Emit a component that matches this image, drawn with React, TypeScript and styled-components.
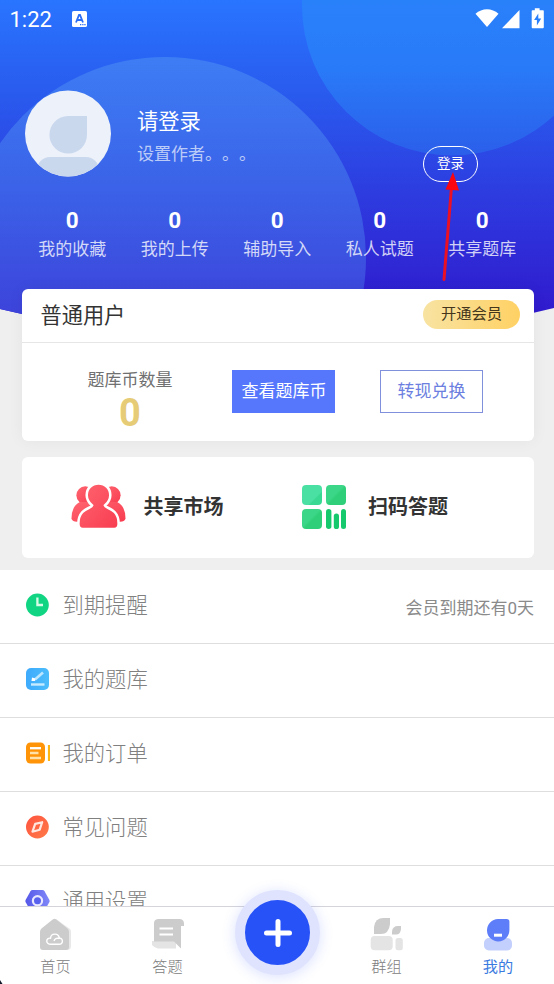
import React from "react";
import styled, { createGlobalStyle } from "styled-components";

const Global = createGlobalStyle`
  * { box-sizing: border-box; }
  body {
    margin: 0;
    background: #efefef;
    font-family: Roboto, "Noto Sans CJK SC", sans-serif;
    font-weight: 400;
    text-spacing-trim: space-all;
  }
  svg { display: block; flex: none; }
`;

const Screen = styled.div`
  position: relative;
  width: 554px;
  height: 984px;
  overflow: hidden;
  display: flex;
  flex-direction: column;
  background: #efefef;
`;

const Backdrop = styled.svg`
  position: absolute;
  left: 0;
  top: 0;
`;

const Arrow = styled.svg`
  position: absolute;
  left: 436px;
  top: 170px;
`;

const Corner = styled.svg`
  position: absolute;
  left: 0;
  bottom: 0;
`;

const Hero = styled.header`
  position: relative;
  height: 289px;
  flex: none;
  color: #fff;
`;

const StatusBar = styled.div`
  height: 38px;
  display: flex;
  align-items: center;
  padding: 0 8px 0 9.5px;
`;

const Clock = styled.span`
  font-size: 22px;
  line-height: 24px;
  width: 62.5px;
  padding-top: 1px;
`;

const StatusIcons = styled.div`
  margin-left: auto;
  display: flex;
`;

const Profile = styled.div`
  display: flex;
  height: 87px;
  margin-top: 52px;
  padding: 0 76px 0 25px;
`;

const Names = styled.div`
  margin-left: 26px;
  padding-top: 17px;
`;

const UserName = styled.div`
  font-size: 21.3px;
  line-height: 30px;
`;

const UserNote = styled.div`
  font-size: 17px;
  line-height: 24px;
  margin-top: 5px;
  color: rgba(255, 255, 255, 0.68);
  white-space: nowrap;
`;

const LoginButton = styled.button`
  width: 55px;
  height: 36px;
  margin: 56px 0 0 auto;
  padding: 0 0 2px;
  border: 1px solid #fff;
  border-radius: 18px;
  background: transparent;
  color: #fff;
  font-family: inherit;
  font-size: 13.6px;
  line-height: 20px;
`;

const Stats = styled.div`
  display: grid;
  grid-template-columns: repeat(5, 1fr);
  padding: 0 20.5px 0 21px;
  margin-top: 29px;
  text-align: center;
`;

const StatValue = styled.div`
  font-size: 22.5px;
  line-height: 28px;
  font-weight: 700;
`;

const StatLabel = styled.div`
  font-size: 17px;
  line-height: 24px;
  margin-top: 3px;
  color: rgba(255, 255, 255, 0.78);
`;

const Card = styled.section<{ $height: number; $top?: number; $shadow?: boolean }>`
  position: relative;
  flex: none;
  height: ${(p) => p.$height}px;
  margin: ${(p) => p.$top ?? 0}px 20px 0 21.5px;
  border-radius: 6px;
  background: #fff;
  box-shadow: ${(p) => (p.$shadow ? "0 0 16px rgba(0, 0, 0, 0.05)" : "none")};
`;

const CardHead = styled.div`
  height: 54px;
  display: flex;
  align-items: center;
  justify-content: space-between;
  padding: 0 14px 3px 19px;
  border-bottom: 1px solid #e6e6e6;
`;

const Tier = styled.span`
  padding-top: 3px;
  font-size: 21.2px;
  line-height: 30px;
  color: #333;
`;

const Upgrade = styled.button`
  width: 97px;
  height: 29px;
  border: 0;
  padding: 0;
  border-radius: 15px;
  background: linear-gradient(90deg, #f8e3a2, #ffd164);
  color: #44361c;
  font-family: inherit;
  font-size: 15.3px;
  line-height: 22px;
`;

const CoinRow = styled.div`
  display: flex;
  padding: 27px 0 0 50px;
`;

const CoinInfo = styled.div`
  width: 117px;
  margin-top: -1px;
  text-align: center;
`;

const CoinLabel = styled.div`
  font-size: 17px;
  line-height: 22px;
  color: #707070;
`;

const CoinValue = styled.div`
  font-size: 38px;
  line-height: 44px;
  font-weight: 700;
  color: #e6cc76;
`;

const CoinButton = styled.button<{ $filled?: boolean }>`
  width: 103px;
  height: 43px;
  margin-left: 44.5px;
  padding: 0 0 2px 1px;
  border: 1px solid ${(p) => (p.$filled ? "#5677fc" : "#8090dc")};
  background: ${(p) => (p.$filled ? "#5677fc" : "#fff")};
  color: ${(p) => (p.$filled ? "#fff" : "#6c7fe0")};
  font-family: inherit;
  font-size: 17px;
  line-height: 24px;
  white-space: nowrap;

  &:first-of-type { margin-left: 43.5px; }
`;

const Shortcuts = styled.div`
  display: flex;
  align-items: center;
  height: 100%;
  padding: 0 0 1px 48px;
`;

const Shortcut = styled.div<{ $width: number; $gap: number }>`
  display: flex;
  align-items: center;
  gap: ${(p) => p.$gap}px;
  width: ${(p) => p.$width}px;
  font-size: 20px;
  line-height: 28px;
  font-weight: 700;
  color: #333;
`;

const Menu = styled.main`
  flex: 1;
  min-height: 0;
  overflow: hidden;
  margin-top: 12px;
  background: #fff;
`;

const MenuRow = styled.div`
  height: 74px;
  display: flex;
  align-items: center;
  padding: 0 20px 4px 25px;
  border-bottom: 1px solid #dedede;
`;

const MenuLabel = styled.span`
  margin-left: 12.5px;
  padding-top: 3px;
  font-size: 21.3px;
  line-height: 30px;
  font-weight: 300;
  color: #808080;
`;

const MenuNote = styled.span`
  margin-left: auto;
  padding-top: 6px;
  font-size: 17px;
  line-height: 24px;
  font-weight: 400;
  color: #8a8a8a;
`;

const NavBar = styled.nav`
  position: relative;
  flex: none;
  height: 78px;
  display: grid;
  grid-template-columns: 111px 113px 107px 111px 112px;
  background: #fff;
  border-top: 1px solid #d4d4da;
`;

const NavItem = styled.div<{ $active?: boolean }>`
  display: flex;
  flex-direction: column;
  align-items: center;
  padding-top: 9px;
  gap: 5px;
  font-size: 15.2px;
  line-height: 20px;
  font-weight: ${(p) => (p.$active ? 400 : 300)};
  color: ${(p) => (p.$active ? "#397be0" : "#808080")};
`;

const AddButton = styled.button`
  position: absolute;
  left: 235px;
  top: -17px;
  width: 85px;
  height: 85px;
  display: grid;
  place-items: center;
  padding: 0;
  border: 10.5px solid #dfe3fd;
  border-radius: 50%;
  background: #2752f8;
  box-shadow: 0 2px 14px rgba(70, 100, 255, 0.2);
`;

function HeroBackdrop() {
  return (
    <Backdrop width="554" height="345" viewBox="0 0 554 345">
      <defs>
        <linearGradient id="sky" x1="0" y1="0" x2="0" y2="1">
          <stop offset="0" stopColor="#2975ff" />
          <stop offset="0.28" stopColor="#295aee" />
          <stop offset="0.55" stopColor="#2d3de0" />
          <stop offset="0.9" stopColor="#301bce" />
          <stop offset="1" stopColor="#3018ca" />
        </linearGradient>
        <linearGradient id="discRight" gradientUnits="userSpaceOnUse" x1="0" y1="0" x2="0" y2="156">
          <stop offset="0" stopColor="#2981fa" />
          <stop offset="0.45" stopColor="#297af8" />
          <stop offset="1" stopColor="#2b5eea" />
        </linearGradient>
        <linearGradient id="discLeft" gradientUnits="userSpaceOnUse" x1="0" y1="57" x2="0" y2="320">
          <stop offset="0" stopColor="#3d7df4" />
          <stop offset="0.5" stopColor="#3b62e8" />
          <stop offset="1" stopColor="#3d42da" />
        </linearGradient>
        <clipPath id="bowl">
          <path d="M0 0H554V308Q277 376 0 309Z" />
        </clipPath>
      </defs>
      <g clipPath="url(#bowl)">
        <rect width="554" height="345" fill="url(#sky)" />
        <circle cx="452" cy="5.5" r="150" fill="url(#discRight)" />
        <circle cx="165" cy="258" r="201" fill="url(#discLeft)" />
      </g>
    </Backdrop>
  );
}

const KeyboardIcon = () => (
  <svg width="15" height="16" viewBox="0 0 15 16">
    <rect width="15" height="16" rx="1.6" fill="#fff" />
    <path d="M4 11.5 7 3.8h1l3 7.7M5.1 9h4.6" fill="none" stroke="#2b6df5" strokeWidth="1.8" />
    <path d="M8 13.6h1.3M10.2 13.6h1.3M12.3 13.6h1.3" stroke="#2b6df5" strokeWidth="1.2" />
  </svg>
);

const SignalIcons = () => (
  <svg width="72" height="22" viewBox="0 0 72 22" fill="#fff">
    <path d="M1.500 5.800C8-.4 18-.4 24.500 5.800L13 19.100Z" />
    <path d="M45.500 2V20.200H28Z" />
    <path d="M60.800.3h4.800v1.900H69q.8 0 .8.800V19.300q0 .9-.9.900H58.600q-.9 0-.9-.9V3q0-.8.8-.8h2.300Z" />
    <path d="m64.300 5.500-4.200 6.500h2.800v5.500l4.300-7h-2.900Z" fill="#2980fa" />
  </svg>
);

const Avatar = () => (
  <svg width="86" height="87" viewBox="0 0 86 87">
    <defs>
      <clipPath id="face"><circle cx="43" cy="43.500" r="43" /></clipPath>
    </defs>
    <g clipPath="url(#face)">
      <rect width="86" height="87" fill="#edf1fa" />
      <path d="M43 26H62V44.500A18.800 18.800 0 1 1 43 26Z" fill="#cad8ee" />
      <rect x="12" y="67" width="62" height="34" rx="13" fill="#cad8ee" />
    </g>
  </svg>
);

const PeopleIcon = () => (
  <svg width="57" height="50" viewBox="0 0 58 50">
    <defs>
      <linearGradient id="coral" x1="0" y1="0" x2="1" y2="1">
        <stop offset="0" stopColor="#ff6570" />
        <stop offset="1" stopColor="#f83c50" />
      </linearGradient>
    </defs>
    <g fill="url(#coral)">
      <circle cx="15.500" cy="13" r="9" />
      <circle cx="42.500" cy="13" r="9" />
      <path d="M1.500 37Q1.500 24 10 20H48Q56.500 24 56.500 37Q55.500 40 51 40H7Q2.500 40 1.500 37Z" />
    </g>
    <path d="M22.500 23.500C19 20.500 17 17 17 13C17 6 22 1 29 1S41 6 41 13C41 17 39 20.500 35.500 23.500C36 26.500 49.500 26 49.500 42Q49.500 47.500 45 47.500H13Q8.500 47.500 8.500 42C8.500 26 22 26.500 22.500 23.500Z" fill="url(#coral)" stroke="#fff" strokeWidth="2.600" />
  </svg>
);

const TilesIcon = () => (
  <svg width="46" height="46" viewBox="0 0 46 46">
    <defs>
      <linearGradient id="mint" x1="0" y1="0" x2="1" y2="1">
        <stop offset="0.65" stopColor="#4be0a3" />
        <stop offset="0.68" stopColor="#3ad993" />
      </linearGradient>
      <linearGradient id="green" x1="0" y1="0" x2="1" y2="1">
        <stop offset="0.45" stopColor="#3bd688" />
        <stop offset="0.55" stopColor="#2fce79" />
      </linearGradient>
    </defs>
    <rect x="1" y="1" width="20" height="20" rx="4" fill="url(#mint)" />
    <rect x="25" y="1" width="20" height="20" rx="4" fill="url(#green)" />
    <rect x="1" y="25" width="20" height="20" rx="4" fill="url(#green)" />
    <g fill="#17c96d">
      <rect x="25" y="25" width="5.400" height="20" rx="2.700" />
      <rect x="32.800" y="29.500" width="5.200" height="15.500" rx="2.600" />
      <rect x="40" y="25" width="5" height="20" rx="2.500" />
    </g>
  </svg>
);

const ClockIcon = () => (
  <svg width="25" height="24" viewBox="0 0 25 24">
    <circle cx="12.400" cy="12" r="11.400" fill="#12d584" />
    <path d="M12.400 4.500V12H18" fill="none" stroke="#d8fbe8" strokeWidth="2.300" />
  </svg>
);

const BankIcon = () => (
  <svg width="25" height="24" viewBox="0 0 25 24">
    <defs>
      <linearGradient id="azure" x1="0" y1="0" x2="1" y2="0">
        <stop offset="0" stopColor="#3eaafc" />
        <stop offset="1" stopColor="#4cbdfb" />
      </linearGradient>
    </defs>
    <rect x="1" y="1" width="23" height="22" rx="5" fill="url(#azure)" />
    <path d="m10 12.500 8-7" stroke="#bce7ff" strokeWidth="2.600" />
    <path d="M7 10.500 10.500 11.500 10 14 6.500 14Z" fill="#fff" />
    <path d="M6 17.500H19.500" stroke="#c8ebff" strokeWidth="2.400" />
  </svg>
);

const OrderIcon = () => (
  <svg width="25" height="24" viewBox="0 0 25 24">
    <rect x="1" y="1.500" width="19" height="21" rx="4.500" fill="#ff9408" />
    <path d="M5 7.200H16" stroke="#fff" strokeWidth="2.300" />
    <path d="M5 12H13.500M5 17H16" stroke="#ffe1ac" strokeWidth="2.300" />
    <path d="M24 4V20" stroke="#fdb515" strokeWidth="2.200" />
  </svg>
);

const CompassIcon = () => (
  <svg width="25" height="24" viewBox="0 0 25 24">
    <defs>
      <linearGradient id="flame" x1="0" y1="0" x2="1" y2="1">
        <stop offset="0" stopColor="#ff533f" />
        <stop offset="1" stopColor="#ff7b48" />
      </linearGradient>
    </defs>
    <circle cx="12.400" cy="12" r="11.400" fill="url(#flame)" />
    <path d="M10.200 8.900 17.200 7.200 14.700 14.700 7.500 16.700Z" fill="none" stroke="#ffe7df" strokeWidth="2.200" strokeLinejoin="round" />
  </svg>
);

const SettingsIcon = () => (
  <svg width="25" height="24" viewBox="0 0 25 24">
    <defs>
      <linearGradient id="violet" x1="0" y1="0" x2="1" y2="0">
        <stop offset="0" stopColor="#5658e8" />
        <stop offset="1" stopColor="#8088f8" />
      </linearGradient>
    </defs>
    <path d="M7.500 1H17.500Q18.800 1 19.500 2.200L24.300 10.700Q25 12 24.300 13.300L19.500 21.800Q18.800 23 17.500 23H7.500Q6.200 23 5.500 21.800L.7 13.300Q0 12 .7 10.700L5.500 2.200Q6.200 1 7.500 1Z" fill="url(#violet)" />
    <circle cx="12.500" cy="11.700" r="4.600" fill="#5962ec" stroke="#e9e8ff" strokeWidth="2.200" />
  </svg>
);

const HomeIcon = () => (
  <svg width="34" height="36" viewBox="0 0 34 36">
    <path d="M17 3 31 13Q32 14 32 16V30Q32 34 28 34H8Z" fill="#e8e8e8" />
    <path d="M13.700 3.400Q15.500 1.900 17.300 3.400L28.500 12.500Q30 13.900 30 16V31Q30 34 27 34H4Q1 34 1 31V16Q1 13.900 2.500 12.500Z" fill="#cccccc" />
    <path d="M12 28.300C6 28.300 6.800 21.500 11.500 22.200C12 16.500 20.500 17 20.200 22.400C24.500 21.500 24.500 28.300 20 28.300Z" fill="none" stroke="#fff" strokeWidth="1.400" />
    <path d="M15 25C15.500 22.500 17.500 21.800 20.200 22.400" fill="none" stroke="#fff" strokeWidth="1.400" />
  </svg>
);

const AnswerIcon = () => (
  <svg width="34" height="36" viewBox="0 0 34 36">
    <path d="M1 25H25V32.500H7Q3.500 32 1 29Z" fill="#e4e4e4" />
    <path d="M7 3H29Q33 3.500 33 7.500V10H30V32.500L23 25.500H3V7Q3 3.500 7 3Z" fill="#cccccc" />
    <path d="M8.500 12.500H22M8.500 18.500H22" stroke="#fff" strokeWidth="2.200" />
  </svg>
);

const GroupIcon = () => (
  <svg width="34" height="36" viewBox="0 0 34 36">
    <path d="M4 18V11Q5 2 13.500 2H20V8Q19 18 11 18Z" fill="#cccccc" />
    <path d="M22 18.500V15.500Q22.500 10 28 10H31V13Q30.500 18.500 26 18.500Z" fill="#cccccc" />
    <rect x=".7" y="20" width="22" height="14.300" rx="4" fill="#e4e4e4" />
    <rect x="25.500" y="22" width="7.300" height="12.300" rx="2.500" fill="#e4e4e4" />
  </svg>
);

const MineIcon = () => (
  <svg width="34" height="36" viewBox="0 0 34 36">
    <rect x="3" y="22" width="28" height="12.500" rx="5" fill="#c3cffc" />
    <path d="M17 3H26Q28.400 3 28.400 5.500V14A11.200 11.200 0 1 1 17 3Z" fill="#5d7df9" />
    <rect x="13" y="17.700" width="8" height="3" fill="#fff" />
  </svg>
);

const stats = ["我的收藏", "我的上传", "辅助导入", "私人试题", "共享题库"];

const menu = [
  { label: "到期提醒", icon: <ClockIcon />, note: "会员到期还有0天" },
  { label: "我的题库", icon: <BankIcon /> },
  { label: "我的订单", icon: <OrderIcon /> },
  { label: "常见问题", icon: <CompassIcon /> },
  { label: "通用设置", icon: <SettingsIcon /> },
];

export default function App() {
  return (
    <Screen>
      <Global />
      <HeroBackdrop />
      <Hero>
        <StatusBar>
          <Clock>1:22</Clock>
          <KeyboardIcon />
          <StatusIcons><SignalIcons /></StatusIcons>
        </StatusBar>
        <Profile>
          <Avatar />
          <Names>
            <UserName>请登录</UserName>
            <UserNote>设置作者。。。</UserNote>
          </Names>
          <LoginButton>登录</LoginButton>
        </Profile>
        <Stats>
          {stats.map((label) => (
            <div key={label}>
              <StatValue>0</StatValue>
              <StatLabel>{label}</StatLabel>
            </div>
          ))}
        </Stats>
      </Hero>

      <Card $height={152} $shadow>
        <CardHead>
          <Tier>普通用户</Tier>
          <Upgrade>开通会员</Upgrade>
        </CardHead>
        <CoinRow>
          <CoinInfo>
            <CoinLabel>题库币数量</CoinLabel>
            <CoinValue>0</CoinValue>
          </CoinInfo>
          <CoinButton $filled>查看题库币</CoinButton>
          <CoinButton>转现兑换</CoinButton>
        </CoinRow>
      </Card>

      <Card $height={101} $top={16}>
        <Shortcuts>
          <Shortcut $width={231} $gap={17}><PeopleIcon />共享市场</Shortcut>
          <Shortcut $width={160} $gap={21.5}><TilesIcon />扫码答题</Shortcut>
        </Shortcuts>
      </Card>

      <Menu>
        {menu.map((item) => (
          <MenuRow key={item.label}>
            {item.icon}
            <MenuLabel>{item.label}</MenuLabel>
            {item.note && <MenuNote>{item.note}</MenuNote>}
          </MenuRow>
        ))}
      </Menu>

      <NavBar>
        <NavItem><HomeIcon />首页</NavItem>
        <NavItem><AnswerIcon />答题</NavItem>
        <span />
        <NavItem><GroupIcon />群组</NavItem>
        <NavItem $active><MineIcon />我的</NavItem>
        <AddButton aria-label="添加">
          <svg width="30" height="30" viewBox="0 0 30 30">
            <path d="M15 3.500V26.500M3.500 15H26.500" stroke="#fff" strokeWidth="5" strokeLinecap="round" />
          </svg>
        </AddButton>
      </NavBar>

      <Arrow width="28" height="114" viewBox="0 0 28 114">
        <path d="M8 109.500 15.500 17" stroke="#ec1024" strokeWidth="3" strokeLinecap="round" />
        <path d="M17 2 23 20.500 9.500 19.500Z" fill="#fa0610" />
      </Arrow>
      <Corner width="3" height="4" viewBox="0 0 3 4"><path d="M0 0 2.500 4H0Z" fill="#111827" /></Corner>
    </Screen>
  );
}
